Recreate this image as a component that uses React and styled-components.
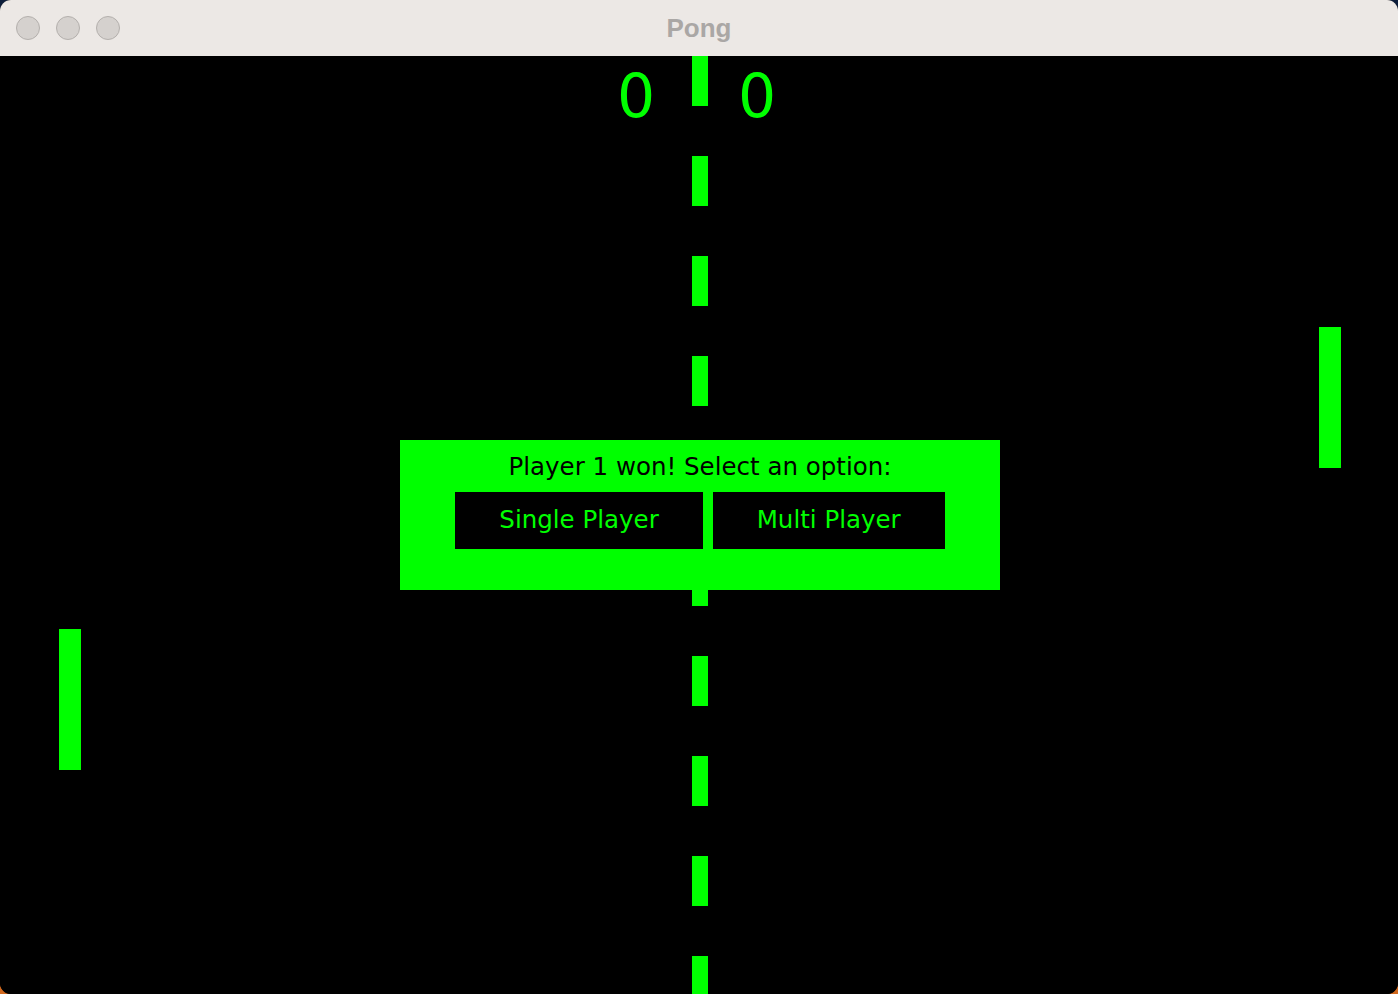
import React from "react";
import styled, { createGlobalStyle } from "styled-components";

const GREEN = "#00ff00";

const Global = createGlobalStyle`
  html, body { margin: 0; padding: 0; }
  body {
    width: 1398px;
    height: 994px;
    overflow: hidden;
    background: linear-gradient(180deg, #0c1d3a 0%, #3a3050 50%, #d2691e 100%);
  }
  #root { width: 1398px; height: 994px; }
`;

const Window = styled.div`
  width: 1398px;
  height: 994px;
  display: flex;
  flex-direction: column;
  border-radius: 11px;
  overflow: hidden;
  background: #000;
`;

const TitleBar = styled.div`
  height: 56px;
  flex: none;
  position: relative;
  display: flex;
  align-items: center;
  justify-content: center;
  background: #ece8e5;
`;

const Lights = styled.div`
  position: absolute;
  left: 16px;
  top: 16px;
  display: flex;
  gap: 16px;
`;

const Light = styled.span`
  width: 24px;
  height: 24px;
  box-sizing: border-box;
  border-radius: 50%;
  background: #d5d1ce;
  border: 1px solid #b4b0ad;
`;

const Title = styled.div`
  font-family: "Liberation Sans", Arial, sans-serif;
  font-weight: 700;
  font-size: 26px;
  color: #aaa7a5;
  margin-top: 0px;
`;

const Court = styled.div`
  flex: 1;
  position: relative;
  background: #000;
  overflow: hidden;
`;

const CenterLine = styled.div`
  position: absolute;
  left: 692px;
  top: 0;
  bottom: 0;
  width: 16px;
  background: repeating-linear-gradient(
    180deg,
    ${GREEN} 0px,
    ${GREEN} 50px,
    transparent 50px,
    transparent 100px
  );
`;

const Score = styled.div`
  position: absolute;
  top: 10px;
  left: ${(p) => p.$x}px;
  font-family: "DejaVu Sans", Verdana, sans-serif;
  font-size: 60px;
  line-height: 60px;
  color: ${GREEN};
`;

const Paddle = styled.div`
  position: absolute;
  left: ${(p) => p.$x}px;
  top: ${(p) => p.$y}px;
  width: 22px;
  height: 141px;
  background: ${GREEN};
`;

const Dialog = styled.div`
  position: absolute;
  left: 400px;
  top: 384px;
  width: 600px;
  height: 150px;
  box-sizing: border-box;
  background: ${GREEN};
  display: flex;
  flex-direction: column;
  align-items: center;
  padding-top: 10px;
  font-family: "DejaVu Sans", Verdana, sans-serif;
`;

const Message = styled.div`
  font-size: 24.5px;
  line-height: 34px;
  color: #000;
`;

const Buttons = styled.div`
  display: flex;
  gap: 10px;
  margin-top: 8px;
`;

const Button = styled.button`
  height: 57px;
  padding: 0 44px 2px;
  border: none;
  border-radius: 0;
  background: #000;
  color: ${GREEN};
  font-family: "DejaVu Sans", Verdana, sans-serif;
  font-size: 24.5px;
  cursor: pointer;
`;

export default function App() {
  return (
    <>
      <Global />
      <Window>
        <TitleBar>
          <Lights>
            <Light />
            <Light />
            <Light />
          </Lights>
          <Title>Pong</Title>
        </TitleBar>
        <Court>
          <CenterLine />
          <Score $x={617}>0</Score>
          <Score $x={738}>0</Score>
          <Paddle $x={1319} $y={271} />
          <Paddle $x={59} $y={573} />
          <Dialog>
            <Message>Player 1 won! Select an option:</Message>
            <Buttons>
              <Button>Single Player</Button>
              <Button>Multi Player</Button>
            </Buttons>
          </Dialog>
        </Court>
      </Window>
    </>
  );
}
